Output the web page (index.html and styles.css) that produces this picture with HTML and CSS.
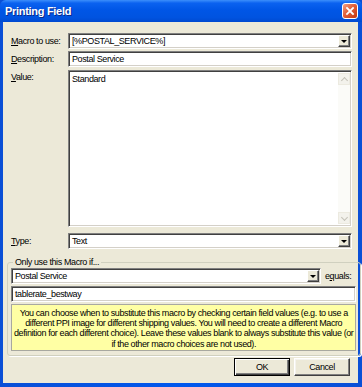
FILE: index.html
```html
<!DOCTYPE html>
<html lang="en">

<head>
  <meta charset="UTF-8">
  <title>Printing Field</title>
  <link rel="stylesheet" href="styles.css">
</head>

<body>
  <div id="window">
    <div id="titlebar">
      <span class="title">Printing Field</span>
      <span class="close-btn">
        <svg width="14" height="14" viewBox="0 0 14 14">
          <path d="M4 4 L10 10 M10 4 L4 10" stroke="#fff" stroke-width="1.8" stroke-linecap="square" />
        </svg>
      </span>
    </div>

    <div id="client">
      <div class="row">
        <label><u>M</u>acro to use:</label>
        <div class="combo">
          <span class="combo-text">[%POSTAL_SERVICE%]</span>
          <span class="drop"><span class="arrow"></span></span>
        </div>
      </div>

      <div class="row">
        <label><u>D</u>escription:</label>
        <div class="edit">Postal Service</div>
      </div>

      <div class="row memo-row">
        <label><u>V</u>alue:</label>
        <div class="memo">
          <div class="memo-text">Standard</div>
          <div class="scrollbar">
            <span class="scroll-btn"><span class="chev up"></span></span>
            <span class="scroll-track"></span>
            <span class="scroll-btn"><span class="chev down"></span></span>
          </div>
        </div>
      </div>

      <div class="row type-row">
        <label><u>T</u>ype:</label>
        <div class="combo">
          <span class="combo-text">Text</span>
          <span class="drop"><span class="arrow"></span></span>
        </div>
      </div>

      <fieldset class="group">
        <legend>Only use this Macro if...</legend>
        <div class="cond-row">
          <div class="combo cond-combo">
            <span class="combo-text">Postal Service</span>
            <span class="drop"><span class="arrow"></span></span>
          </div>
          <span class="equals">e<u>q</u>uals:</span>
        </div>
        <div class="edit">tablerate_bestway</div>
        <div class="note">
          You can choose when to substitute this macro by checking certain field values (e.g. to use a<br>
          different PPI image for different shipping values. You will need to create a different Macro<br>
          definition for each different choice). Leave these values blank to always substitute this value (or<br>
          if the other macro choices are not used).
        </div>
      </fieldset>

      <div class="buttons">
        <button class="default">OK</button>
        <button>Cancel</button>
      </div>
    </div>
  </div>
</body>

</html>
```

FILE: styles.css
```css
body {
  margin: 0;
  background-color: #0054e3;
  font-family: "Liberation Sans", Arial, sans-serif;
  font-size: 9px;
  letter-spacing: -0.4px;
  color: #000;
}

#window {
  width: 362px;
  height: 387px;
  box-sizing: border-box;
  padding: 0 4px 4px 3px;
  background: linear-gradient(to right, #0a4fd6, #0058ee 50%, #0a4fd6);
  display: flex;
  flex-direction: column;
}

#titlebar {
  height: 22px;
  margin: 0 -4px 0 -3px;
  padding: 0 4px 0 5px;
  display: flex;
  align-items: center;
  justify-content: space-between;
  background: linear-gradient(#3c8ffb 0%, #0b62f0 14%, #0056e6 45%, #0053e0 80%, #0049d0 100%);
  border-radius: 6px 6px 0 0;
}

.title {
  color: #fff;
  font-weight: bold;
  font-size: 11px;
  letter-spacing: -0.3px;
  text-shadow: 1px 1px 0 #0a2a8a;
}

.close-btn {
  width: 14px;
  height: 14px;
  border: 1px solid #fff;
  border-radius: 3px;
  background: linear-gradient(135deg, #f0a085, #e2603a 45%, #c5370e);
  display: flex;
}

#client {
  flex: 1;
  background-color: #ece9d8;
  padding-top: 11px;
  display: flex;
  flex-direction: column;
}

.row {
  display: flex;
  align-items: center;
  margin: 0 6px 2px 8px;
}

.row label {
  width: 57px;
  flex: none;
  white-space: nowrap;
}

.memo-row {
  align-items: flex-start;
  margin-top: 1px;
}

.memo-row label {
  padding-top: 2px;
}

.type-row {
  margin-top: 4px;
}

.combo,
.edit,
.memo {
  flex: 1;
  height: 16px;
  box-sizing: border-box;
  background-color: #fff;
  border: 1px solid;
  border-color: #808080 #fff #fff #808080;
  box-shadow: inset 1px 1px 0 #404040, inset -1px -1px 0 #d4d0c8;
  display: flex;
  align-items: center;
}

.combo-text,
.edit {
  padding-left: 3px;
  white-space: nowrap;
}

.combo-text {
  flex: 1;
}

.drop {
  width: 12px;
  height: 12px;
  margin-right: 1px;
  box-sizing: border-box;
  background-color: #ece9d8;
  border: 1px solid;
  border-color: #fff #404040 #404040 #fff;
  box-shadow: inset -1px -1px 0 #808080;
  display: flex;
  align-items: center;
  justify-content: center;
}

.arrow {
  width: 0;
  height: 0;
  border-left: 3px solid transparent;
  border-right: 3px solid transparent;
  border-top: 3px solid #000;
}

.memo {
  height: 157px;
  align-items: stretch;
}

.memo-text {
  flex: 1;
  padding: 3px 3px;
}

.scrollbar {
  width: 12px;
  margin: 2px 1px 2px 0;
  display: flex;
  flex-direction: column;
  background-color: #fbfbf8;
}

.scroll-btn {
  height: 12px;
  background-color: #f3f2ec;
  border: 1px solid #eceae0;
  box-sizing: border-box;
  display: flex;
  align-items: center;
  justify-content: center;
}

.scroll-track {
  flex: 1;
}

.chev {
  width: 4px;
  height: 4px;
  border-left: 1px solid #c4c2b8;
  border-top: 1px solid #c4c2b8;
}

.chev.up {
  transform: rotate(45deg);
  margin-top: 2px;
}

.chev.down {
  transform: rotate(225deg);
  margin-top: -2px;
}

.group {
  margin: 5px 2px 0 4px;
  padding: 0 4px 4px 3px;
  border: 1px solid #d0d0bf;
  border-radius: 3px;
  box-shadow: 1px 1px 0 #fff;
}

.group legend {
  padding: 0 2px;
  margin-left: 2px;
  line-height: 12px;
}

.cond-row {
  display: flex;
  align-items: center;
  margin-bottom: 2px;
}

.cond-combo {
  flex: none;
  width: 310px;
}

.equals {
  margin-left: 4px;
}

.group .edit {
  margin-bottom: 2px;
}

.note {
  height: 47px;
  box-sizing: border-box;
  background-color: #ffffa4;
  border: 1px solid #a8a8a0;
  padding: 3px 2px 0;
  text-align: center;
  white-space: nowrap;
  line-height: 10.2px;
}

.buttons {
  display: flex;
  justify-content: flex-end;
  gap: 4px;
  margin: 2px 8px 0 0;
}

button {
  width: 56px;
  height: 18px;
  padding: 0;
  font: inherit;
  letter-spacing: inherit;
  background-color: #ece9d8;
  border: 1px solid;
  border-color: #fff #404040 #404040 #fff;
  box-shadow: inset -1px -1px 0 #808080, inset 1px 1px 0 #f4f3ee;
}

button.default {
  border: 1px solid #000;
  box-shadow: inset 1px 1px 0 #fff, inset -1px -1px 0 #404040, inset -2px -2px 0 #808080;
}
```
